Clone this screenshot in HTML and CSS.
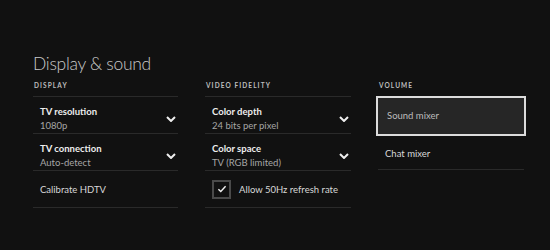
FILE: index.html
```html
<!DOCTYPE html>
<html lang="en">
<head>
  <meta charset="UTF-8">
  <title>Display &amp; sound</title>
  <link rel="stylesheet" href="styles.css">
</head>
<body>
  <main class="page">
    <h1 class="page-title">Display &amp; sound</h1>

    <div class="columns">
      <!-- Display -->
      <section class="group">
        <h2 class="group-title">DISPLAY</h2>
        <div class="row">
          <div class="row-text">
            <div class="row-label">TV resolution</div>
            <div class="row-value">1080p</div>
          </div>
          <svg class="chevron" viewBox="0 0 10 6"><path d="M1 1l4 4 4-4"/></svg>
        </div>
        <div class="row">
          <div class="row-text">
            <div class="row-label">TV connection</div>
            <div class="row-value">Auto-detect</div>
          </div>
          <svg class="chevron" viewBox="0 0 10 6"><path d="M1 1l4 4 4-4"/></svg>
        </div>
        <div class="row row-single">
          <div class="row-plain">Calibrate HDTV</div>
        </div>
      </section>

      <!-- Video fidelity -->
      <section class="group">
        <h2 class="group-title">VIDEO FIDELITY</h2>
        <div class="row">
          <div class="row-text">
            <div class="row-label">Color depth</div>
            <div class="row-value">24 bits per pixel</div>
          </div>
          <svg class="chevron" viewBox="0 0 10 6"><path d="M1 1l4 4 4-4"/></svg>
        </div>
        <div class="row">
          <div class="row-text">
            <div class="row-label">Color space</div>
            <div class="row-value">TV (RGB limited)</div>
          </div>
          <svg class="chevron" viewBox="0 0 10 6"><path d="M1 1l4 4 4-4"/></svg>
        </div>
        <div class="row row-single">
          <span class="checkbox">
            <svg viewBox="0 0 12 10"><path d="M1.5 5.2l3 3 6-6.5"/></svg>
          </span>
          <div class="row-plain">Allow 50Hz refresh rate</div>
        </div>
      </section>

      <!-- Volume -->
      <section class="group">
        <h2 class="group-title">VOLUME</h2>
        <div class="row row-single row-focus">
          <div class="row-plain">Sound mixer</div>
        </div>
        <div class="row row-single row-after-focus">
          <div class="row-plain">Chat mixer</div>
        </div>
      </section>
    </div>
  </main>
</body>
</html>
```

FILE: styles.css
```css
* {
  margin: 0;
  padding: 0;
  box-sizing: border-box;
}
body {
  background: #111;
  color: #e6e6e6;
  font-family: Lato, 'Open Sans', sans-serif;
  width: 550px;
  height: 250px;
  overflow: hidden;
}

.page {
  padding: 52px 24px 0 33px;
}

.page-title {
  font-size: 17.5px;
  font-weight: 300;
  line-height: 24px;
  letter-spacing: -0.3px;
  color: #c9c9c9;
}

/* tre colonne */
.columns {
  display: grid;
  grid-template-columns: 145px 146px 146px;
  column-gap: 27px;
  margin-top: 4px;
}

.group-title {
  font-size: 6.5px;
  font-weight: 700;
  letter-spacing: 1.1px;
  color: #bdbdbd;
  line-height: 12px;
  padding-left: 1px;
  height: 17px;
  border-bottom: 1px solid #2a2a2a;
}

.row {
  display: flex;
  align-items: center;
  justify-content: space-between;
  height: 37px;
  padding: 2px 2px 0 7px;
  border-bottom: 1px solid #2a2a2a;
}
.row-text {
  display: flex;
  flex-direction: column;
  padding-top: 5px;
}
.row-label {
  font-size: 9.5px;
  font-weight: 700;
  line-height: 14px;
  color: #ededed;
}
.row-value,
.row-plain {
  font-size: 9.5px;
  line-height: 14px;
  color: #a6a6a6;
}
.row-plain {
  color: #d8d8d8;
}
.row-single {
  justify-content: flex-start;
}

.chevron {
  width: 10px;
  height: 6px;
  margin-top: 5px;
  fill: none;
  stroke: #eee;
  stroke-width: 2;
}

.checkbox {
  width: 19px;
  height: 19px;
  margin-top: -2px;
  border: 2px solid #4a4a4a;
  display: flex;
  align-items: center;
  justify-content: center;
  margin-right: 8px;
}
.checkbox svg {
  width: 10px;
  height: 8px;
  fill: none;
  stroke: #f2f2f2;
  stroke-width: 1.8;
}

/* elemento selezionato */
.row-focus {
  height: 40px;
  margin: -1px -2px 0;
  padding: 0 0 0 9px;
  background: #262626;
  border: 2px solid #dcdcdc;
}
.row-focus .row-plain {
  color: #bcbcbc;
}
.row-after-focus {
  height: 34px;
}
```
